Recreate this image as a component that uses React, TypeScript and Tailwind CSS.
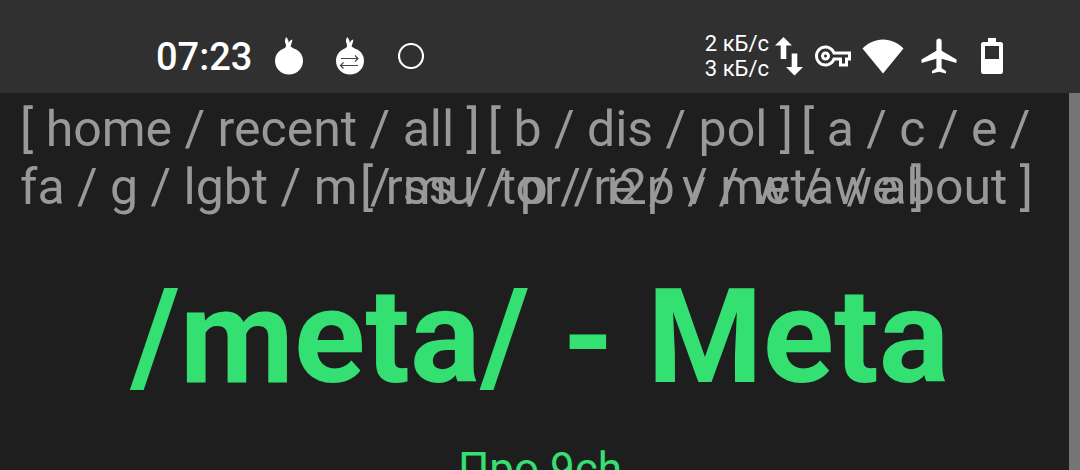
import { Fragment } from "react";
import { MdAirplanemodeActive, MdOutlineVpnKey } from "react-icons/md";

function Links({ items, open = true, close = true }: { items: string[]; open?: boolean; close?: boolean }) {
  return (
    <span>
      {open && "[ "}
      {items.map((item, i) => (
        <Fragment key={item}>
          {i > 0 && " / "}
          <a href={`#${item}`}>{item}</a>
        </Fragment>
      ))}
      {close ? " ]" : " /"}
    </span>
  );
}

function Onion({ arrows = false }: { arrows?: boolean }) {
  return (
    <svg viewBox="0 0 28 38" className="h-[38px] w-7" fill="#fff" aria-hidden="true">
      <path d="M11 9.5 L10.8 7 C9.6 5 9.7 2.5 11.2 0 C12.8 1.800 14 4 13.600 6.300 C14.200 4.500 15.200 3 17.200 2.400 C17.500 4.500 16.400 6 15.600 9.500 C17.500 11.300 20 11.500 22.500 13.300 C26 15.700 28 19.300 28 23.700 C28 31.500 22 37.500 14 37.500 C6 37.500 0 31.500 0 23.700 C0 19.300 2 15.700 5.500 13.300 C8 11.500 10 11.400 11 9.500 Z" />
      {arrows && (
        <path d="M5 21.500 H22 M19 18.500 L22 21.500 L19 24.500 M22 28.500 H4.500 M7.500 25.500 L4.500 28.500 L7.500 31.500" fill="none" stroke="#444" strokeWidth="1.2" />
      )}
    </svg>
  );
}

export default function App() {
  return (
    <div className="relative flex h-screen flex-col overflow-hidden bg-[#1e1e1e] font-['Roboto',sans-serif]">
      <header className="flex h-[93px] shrink-0 items-center justify-between bg-[#303030] pt-[19px] pr-[77px] pl-[156px] text-white">
        <div className="flex items-center">
          <time className="mr-[23px] pt-0.5 text-[38px] leading-none font-medium">07:23</time>
          <Onion />
          <span className="ml-[33px] flex">
            <Onion arrows />
          </span>
          <svg viewBox="0 0 26 26" className="ml-[34px] size-[26px]" fill="none" aria-hidden="true">
            <circle cx="13" cy="13" r="12" stroke="#fff" strokeWidth="2.2" />
          </svg>
        </div>
        <div className="flex items-center">
          <div className="text-[22px] leading-[25px]">
            <p>2 кБ/с</p>
            <p>3 кБ/с</p>
          </div>
          <svg viewBox="0 0 28 40" className="ml-1.5 h-10 w-7" fill="#fff" aria-hidden="true">
            <path d="M8.500 1 L17 9.500 H11.300 V23 H5.700 V9.500 H0 Z M16.700 17.500 H22.300 V31 H28 L19.500 39.500 L11 31 H16.700 Z" />
          </svg>
          <MdOutlineVpnKey className="ml-3 size-9" />
          <svg viewBox="0 0 42 35" className="ml-[11px] h-[35px] w-[42px]" fill="#fff" aria-hidden="true">
            <path d="M21 34.500 L0.500 9.500 C6 4 13 0.500 21 0.500 C29 0.500 36 4 41.500 9.500 Z" />
          </svg>
          <MdAirplanemodeActive className="ml-3.5 size-[42px]" />
          <svg viewBox="0 0 22 36" className="ml-[21px] h-9 w-[22px]" fill="#fff" aria-hidden="true">
            <path fillRule="evenodd" d="M7 0 H15 V4 H19.500 Q22 4 22 6.500 V33.500 Q22 36 19.500 36 H2.500 Q0 36 0 33.500 V6.500 Q0 4 2.500 4 H7 Z M4 8 V21 H18 V8 Z" />
          </svg>
        </div>
      </header>

      <nav className="grid pt-[7px] pr-[47px] pl-5 text-[50px] leading-[58px] whitespace-nowrap text-[#999]">
        <div className="col-start-1 row-start-1">
          <p className="flex gap-2">
            <Links items={["home", "recent", "all"]} />
            <Links items={["b", "dis", "pol"]} />
            <Links items={["a", "c", "e"]} close={false} />
          </p>
          <p>
            <Links items={["fa", "g", "lgbt", "m", "mu", "p", "re", "v", "w", "we"]} open={false} />
          </p>
        </div>
        <p className="col-start-1 row-start-1 self-end justify-self-end">
          <Links items={["rss", "tor", "i2p", "meta", "about"]} />
        </p>
      </nav>

      <main className="flex flex-col items-center text-[#34e072]">
        <h1 className="mt-11 text-[132px] leading-[154px] font-bold whitespace-nowrap">/meta/ - Meta</h1>
        <p className="mt-7 text-[44px] leading-[54px]">Про 9ch</p>
      </main>

      <div className="absolute top-[93px] right-0 bottom-0 w-[11px] bg-[#757575]" />
    </div>
  );
}
